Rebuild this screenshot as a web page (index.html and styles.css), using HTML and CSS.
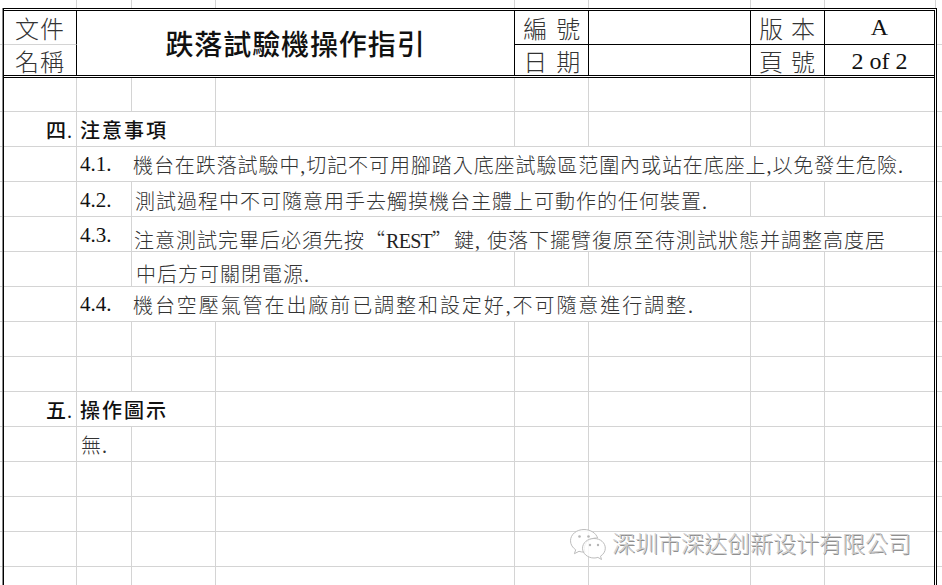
FILE: index.html
```html
<!DOCTYPE html>
<html lang="zh-Hant">
<head>
<meta charset="utf-8">
<title>跌落試驗機操作指引</title>
<link rel="stylesheet" href="styles.css">
</head>
<body>
<div class="sheet">
  <div class="ticks">
    <i></i><i></i><i></i><i></i><i></i><i></i><i></i><i></i>
  </div>
  <div class="frame">
    <header class="head">
      <div class="hc label split">文件</div>
      <div class="hc title">跌落試驗機操作指引</div>
      <div class="hc label wide line">編 號</div>
      <div class="hc line"></div>
      <div class="hc label line">版 本</div>
      <div class="hc value line end">A</div>
      <div class="hc label">名稱</div>
      <div class="hc label wide">日 期</div>
      <div class="hc"></div>
      <div class="hc label">頁 號</div>
      <div class="hc value second end">2 of 2</div>
    </header>
    <main class="grid">
      <div class="c"></div><div class="c"></div><div class="c"></div><div class="c"></div><div class="c"></div><div class="c"></div><div class="c"></div><div class="c end"></div>

      <div class="c heading-no">四.</div><div class="c s2 heading">注意事項</div><div class="c"></div><div class="c"></div><div class="c"></div><div class="c"></div><div class="c end"></div>

      <div class="c"></div>
      <div class="c s7 end item"><span class="no">4.1.</span><span class="tx tight">機台在跌落試驗中,切記不可用腳踏入底座試驗區范圍內或站在底座上,以免發生危險.</span></div>

      <div class="c"></div><div class="c no-cell low"><span class="no">4.2.</span></div>
      <div class="c s4 low pad3"><span class="tx">測試過程中不可隨意用手去觸摸機台主體上可動作的任何裝置.</span></div>
      <div class="c"></div><div class="c end"></div>

      <div class="c"></div><div class="c no-cell low"><span class="no">4.3.</span></div>
      <div class="c s6 end lower pad2"><span class="tx"><span>注意測試完畢后必須先按</span><span class="q">“</span><span class="latin">REST</span><span class="q">”</span><span>鍵, 使落下擺臂復原至待測試狀態并調整高度居</span></span></div>

      <div class="c"></div><div class="c"></div>
      <div class="c s2 lowest pad4"><span class="tx">中后方可關閉電源.</span></div>
      <div class="c"></div><div class="c"></div><div class="c"></div><div class="c end"></div>

      <div class="c"></div>
      <div class="c s5 item"><span class="no">4.4.</span><span class="tx roomy">機台空壓氣管在出廠前已調整和設定好,不可隨意進行調整.</span></div>
      <div class="c"></div><div class="c end"></div>

      <div class="c"></div><div class="c"></div><div class="c"></div><div class="c"></div><div class="c"></div><div class="c"></div><div class="c"></div><div class="c end"></div>
      <div class="c"></div><div class="c"></div><div class="c"></div><div class="c"></div><div class="c"></div><div class="c"></div><div class="c"></div><div class="c end"></div>

      <div class="c heading-no">五.</div><div class="c s2 heading">操作圖示</div><div class="c"></div><div class="c"></div><div class="c"></div><div class="c"></div><div class="c end"></div>

      <div class="c"></div><div class="c none"><span class="tx">無.</span></div><div class="c"></div><div class="c"></div><div class="c"></div><div class="c"></div><div class="c"></div><div class="c end"></div>

      <div class="c"></div><div class="c"></div><div class="c"></div><div class="c"></div><div class="c"></div><div class="c"></div><div class="c"></div><div class="c end"></div>
      <div class="c"></div><div class="c"></div><div class="c"></div><div class="c"></div><div class="c"></div><div class="c"></div><div class="c"></div><div class="c end"></div>
      <div class="c"></div><div class="c"></div><div class="c"></div><div class="c"></div><div class="c"></div><div class="c"></div><div class="c"></div><div class="c end"></div>
      <div class="c"></div><div class="c"></div><div class="c"></div><div class="c"></div><div class="c"></div><div class="c"></div><div class="c"></div><div class="c end"></div>
      <div class="c"></div><div class="c"></div><div class="c"></div><div class="c"></div><div class="c"></div><div class="c"></div><div class="c"></div><div class="c end"></div>
    </main>
  </div>
  <div class="mark">
    <svg class="wechat" viewBox="0 0 38 34" width="38" height="34" aria-hidden="true">
      <path class="bub" d="M15 1.500C7.500 1.500 1.500 6.500 1.500 12.800c0 3.700 2 6.800 5.200 9l-1.300 3.900 4.600-2.400c1.500.5 3 .8 4.800.8h1.200c-.5-1.200-.7-2.400-.7-3.600 0-5.900 5.400-10.500 12.300-10.500h1C27.200 5.300 21.600 1.500 15 1.500z"/>
      <path class="bub" d="M25 10.500c-6.300 0-11.500 4.300-11.500 9.700S18.700 30 25 30c1.400 0 2.700-.2 3.900-.6l3.600 2.100-1-3.300c2.900-1.800 4.800-4.700 4.800-8 0-5.400-4.800-9.700-11.300-9.700z"/>
      <circle class="dot" cx="10.500" cy="8.500" r="1.300"/><circle class="dot" cx="19.500" cy="8.500" r="1.300"/>
      <circle class="dot" cx="21" cy="17" r="1.200"/><circle class="dot" cx="29" cy="17" r="1.200"/>
    </svg>
    <span class="mark-text">深圳市深达创新设计有限公司</span>
  </div>
</div>
</body>
</html>
```
FILE: styles.css
```css
* { box-sizing: border-box; }
html, body { margin: 0; padding: 0; background: #fff; }
body { font-family: "Liberation Serif", "Noto Sans CJK TC", serif; color: #1c1c1c; }

.sheet {
  position: relative;
  width: 942px;
  height: 585px;
  overflow: hidden;
  display: flex;
  flex-direction: column;
  background-color: #fff;
  background-image:
    linear-gradient(#d4d4d4, #d4d4d4),
    repeating-linear-gradient(to bottom, transparent 0 34px, #d4d4d4 34px 35px);
  background-size: 100% 1px, 100% 100%;
  background-position: 0 44px, 0 77px;
  background-repeat: no-repeat;
}

.ticks, .head, .grid {
  display: grid;
  grid-template-columns: 73px 55px 84px 299px 74px 162px 74px 1fr;
}

.ticks { height: 8px; margin-left: 4px; width: 932px; flex: none; }
.ticks i { border-right: 1px solid #d4d4d4; }

.frame {
  flex: 1;
  min-height: 0;
  margin-left: 3px;
  width: 934px;
  background: #fff;
  border-top: 3px double #000;
  border-right: 3px double #000;
  border-left: 1px solid #000;
  box-shadow: -1px 0 0 #8a8a8a;
  overflow: hidden;
}

/* header block */
.head {
  grid-template-rows: 34px 30px;
  height: 67px;
  border-bottom: 3px double #000;
}
.hc {
  display: flex;
  align-items: center;
  justify-content: center;
  border-right: 1px solid #000;
}
.hc.end { border-right: 0; }
.hc.line { border-bottom: 1px solid #000; }
.hc.split { border-bottom: 1px solid #d4d4d4; }
.label { font-size: 24px; letter-spacing: 1px; font-weight: 300; color: #333; }
.label.wide { letter-spacing: 1.5px; padding-left: 2px; }
.value { font-size: 24px; color: #111; }
.value.second { padding-top: 3px; }
.title {
  grid-column: span 3;
  grid-row: span 2;
  font-size: 28px;
  letter-spacing: .9px;
  font-weight: 500;
  color: #111;
}

/* spreadsheet body */
.grid {
  grid-template-rows: 34px;
  grid-auto-rows: 35px;
}
.c {
  display: flex;
  align-items: center;
  min-width: 0;
  white-space: nowrap;
  border-right: 1px solid #d4d4d4;
  border-bottom: 1px solid #d4d4d4;
  font-size: 20px;
}
.c.end { border-right: 0; }
.s2 { grid-column: span 2; }
.s4 { grid-column: span 4; }
.s5 { grid-column: span 5; }
.s6 { grid-column: span 6; }
.s7 { grid-column: span 7; }

.heading-no {
  justify-content: flex-end;
  padding-right: 3px;
  font-weight: 500;
  letter-spacing: 1px;
  color: #111;
}
.heading {
  padding-left: 3px;
  font-weight: 500;
  letter-spacing: 2px;
  color: #111;
}
.item { padding-left: 3px; }
.no { width: 53px; flex: none; font-size: 21px; color: #111; }
.no-cell { padding-left: 3px; }
.tx { letter-spacing: 1px; font-weight: 300; color: #333; }
.tx.tight { letter-spacing: .92px; }
.tx.roomy { letter-spacing: 1.92px; }
.q { font-family: "Noto Sans CJK TC", sans-serif; letter-spacing: 0; display: inline-block; width: 22px; }
.q + .latin { margin-left: -1px; }
.latin { font-size: 20px; letter-spacing: -.7px; color: #222; }
.none { padding-left: 4px; }
.pad2 { padding-left: 2px; }
.pad3 { padding-left: 3px; }
.pad4 { padding-left: 4px; }
.low { padding-top: 2px; }
.lower { padding-top: 11px; }
.lowest { padding-top: 8px; }

/* watermark over the sheet */
.mark {
  position: absolute;
  left: 569px;
  top: 525px;
  display: flex;
  align-items: center;
  gap: 5px;
}
.wechat { display: block; margin-top: 2px; }
.bub { fill: rgba(255, 255, 255, .8); stroke: #bdbdbd; stroke-width: 1; }
.dot { fill: #b5b5b5; }
.mark-text {
  font-family: "Noto Sans CJK SC", sans-serif;
  font-size: 23px;
  font-weight: 300;
  color: #cfcfcf;
  text-shadow: 1px 1px 0 #8f8f8f;
  white-space: nowrap;
  margin-bottom: 3px;
}
```
